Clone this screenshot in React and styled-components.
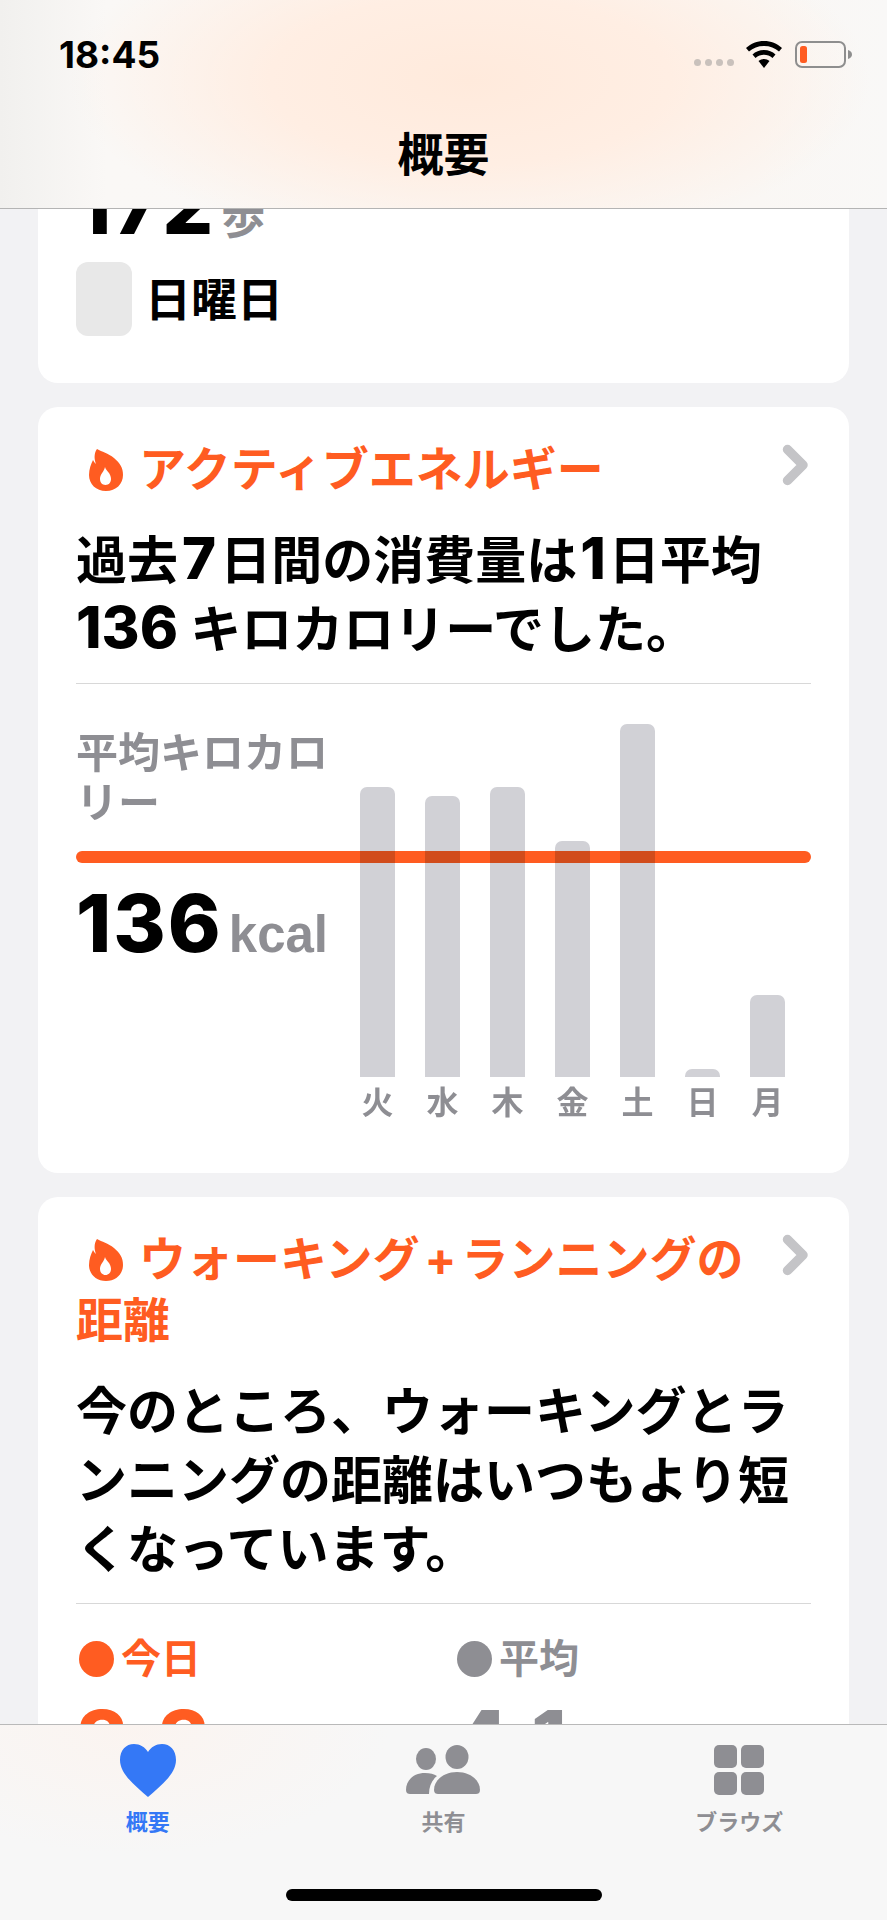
import styled, { createGlobalStyle } from "styled-components";

const GlobalStyle = createGlobalStyle`
  body {
    margin: 0;
    background: #f2f2f4;
    font-family: Inter, "Noto Sans CJK JP", sans-serif;
    font-weight: 700;
    color: #000;
  }
`;

const ORANGE = "#ff5c21";
const GREY = "#8e8e93";

const Page = styled.div`
  width: 887px;
  height: 1920px;
  display: flex;
  flex-direction: column;
  overflow: hidden;
  background: #f2f2f4;
`;

const Header = styled.header`
  height: 208px;
  flex: none;
  display: flex;
  flex-direction: column;
  border-bottom: 1px solid #b4b4b4;
  background:
    radial-gradient(ellipse 400px 170px at 470px 80px, #ffeadc 0%, #ffeee3 50%, rgba(255, 240, 230, 0) 100%),
    linear-gradient(90deg, #f1f0ee 0%, #faf8f6 12%, #faf7f4 85%, #f9f8f7 100%);
`;

const StatusBar = styled.div`
  display: flex;
  align-items: flex-start;
  height: 128px;
  padding: 36px 34px 0 59px;
  box-sizing: border-box;
`;

const Clock = styled.div`
  font-family: Inter, sans-serif;
  font-size: 37px;
  line-height: 38px;
  flex: 1;
`;

const StatusIcons = styled.div`
  display: flex;
  align-items: flex-start;
  margin-top: 5px;
`;

const SignalDots = styled.div`
  display: flex;
  gap: 4px;
  margin: 18px 12px 0 0;
`;

const SignalDot = styled.span`
  width: 7px;
  height: 7px;
  border-radius: 50%;
  background: #c9c1bc;
`;

const Battery = styled.svg`
  margin-left: 13px;
`;

const Title = styled.h1`
  margin: 0;
  margin-top: -4px;
  text-align: center;
  font-size: 46px;
  line-height: 60px;
  font-weight: 700;
`;

const Scroll = styled.main`
  flex: 1;
  min-height: 0;
  overflow: hidden;
  padding: 0 38px;
  display: flex;
  flex-direction: column;
  gap: 24px;
`;

const Card = styled.section`
  flex: none;
  background: #fff;
  border-radius: 20px;
  padding: 0 38px;
`;

const TopCard = styled(Card)`
  border-radius: 0 0 20px 20px;
  height: 174px;
  overflow: hidden;
`;

const BigNumber = styled.div`
  font-family: Inter, sans-serif;
  font-size: 80px;
  font-weight: 800;
  letter-spacing: 2px;
`;

const StepsValue = styled(BigNumber)`
  margin-top: -44px;
  height: 80px;
  line-height: 80px;
  display: flex;
  align-items: baseline;
  gap: 6px;
`;

const StepsUnit = styled.span`
  font-family: "Noto Sans CJK JP", sans-serif;
  font-size: 44px;
  font-weight: 700;
  letter-spacing: 0;
  color: ${GREY};
`;

const DayRow = styled.div`
  margin-top: 17px;
  display: flex;
  align-items: center;
  gap: 13px;
`;

const DaySwatch = styled.div`
  width: 56px;
  height: 74px;
  border-radius: 12px;
  background: #e8e8e8;
`;

const DayName = styled.div`
  font-size: 46px;
  line-height: 74px;
`;

const CardTitleRow = styled.div`
  display: flex;
  justify-content: space-between;
  align-items: flex-start;
  padding-top: 31px;
`;

const CardTitle = styled.h2`
  margin: 0;
  color: ${ORANGE};
  font-size: 47px;
  line-height: 61px;
  font-weight: 700;
  max-width: 690px;
`;

const PlusSign = styled.span`
  margin: 0 5px;
`;

const Flame = styled.svg`
  vertical-align: -5px;
  margin: 0 16px 0 13px;
`;

const Chevron = styled.svg`
  flex: none;
  margin-top: 6px;
  margin-right: 1px;
`;

const Summary = styled.p`
  margin: 27px 0 0;
  font-size: 51px;
  line-height: 69px;
  font-weight: 700;
`;

const SummaryNumber = styled.span`
  font-size: 58px;
  line-height: 0;
  font-weight: 800;
  margin: 0 ${(p) => p.$gap || 0}px;
`;

const Divider = styled.hr`
  margin: 19px 0 0;
  border: 0;
  height: 1px;
  background: #d8d8d8;
`;

const Chart = styled.div`
  position: relative;
  isolation: isolate;
  display: flex;
  height: 489px;
`;

const AverageLine = styled.div`
  position: absolute;
  z-index: 0;
  left: 0;
  right: 0;
  top: 167px;
  height: 12px;
  border-radius: 6px;
  background: ${ORANGE};
`;

const ChartLeft = styled.div`
  width: 284px;
  flex: none;
  padding-top: 44px;
`;

const ChartLabel = styled.div`
  width: 260px;
  font-size: 42px;
  line-height: 50px;
  color: ${GREY};
`;

const ChartValue = styled(BigNumber)`
  margin-top: 50px;
  display: flex;
  align-items: baseline;
  gap: 6px;
  line-height: 90px;
`;

const ChartUnit = styled.span`
  font-family: "Liberation Sans", sans-serif;
  font-size: 51px;
  font-weight: 700;
  letter-spacing: 0;
  color: ${GREY};
`;

const Bars = styled.div`
  display: flex;
  gap: 30px;
  padding-top: 40px;
`;

const BarColumn = styled.div`
  width: 35px;
  display: flex;
  flex-direction: column;
  align-items: center;
`;

const BarTrack = styled.div`
  width: 100%;
  height: 353px;
  display: flex;
  align-items: flex-end;
`;

const Bar = styled.div`
  position: relative;
  z-index: 1;
  width: 100%;
  background: #d1d1d6;
  border-radius: 7px 7px 0 0;
  mix-blend-mode: multiply;
`;

const BarLabel = styled.div`
  margin-top: 8px;
  font-size: 32px;
  line-height: 36px;
  color: ${GREY};
`;

const Legend = styled.div`
  display: grid;
  grid-template-columns: 378px 1fr;
  padding-top: 36px;
`;

const LegendHead = styled.div`
  display: flex;
  align-items: center;
  gap: 7px;
  margin-left: 3px;
  font-size: 40px;
  line-height: 38px;
  color: ${(p) => p.$color};
`;

const LegendDot = styled.span`
  width: 35px;
  height: 36px;
  border-radius: 50%;
  background: ${(p) => p.$color};
`;

const LegendValue = styled(BigNumber)`
  margin-top: 16px;
  line-height: 90px;
  color: ${(p) => p.$color};
`;

const TabBar = styled.nav`
  height: 196px;
  flex: none;
  box-sizing: border-box;
  border-top: 1px solid #b9b9b9;
  background:
    radial-gradient(ellipse 260px 130px at 130px 0, #fbf4f0 0%, rgba(247, 247, 247, 0) 100%),
    #f7f7f7;
  position: relative;
  display: grid;
  grid-template-columns: repeat(3, 1fr);
`;

const Tab = styled.div`
  display: flex;
  flex-direction: column;
  align-items: center;
  padding-top: 18px;
  font-size: 22px;
  line-height: 28px;
  color: ${(p) => (p.$active ? "#3478f6" : GREY)};
`;

const TabIcon = styled.div`
  height: 54px;
  margin-bottom: 11px;
  display: flex;
  align-items: center;
  justify-content: center;
`;

const GridIcon = styled.div`
  display: grid;
  grid-template-columns: 23px 23px;
  grid-auto-rows: 23px;
  gap: 4px;
`;

const GridCell = styled.span`
  border-radius: 5px;
  background: ${GREY};
`;

const HomeIndicator = styled.div`
  position: absolute;
  left: 286px;
  bottom: 19px;
  width: 316px;
  height: 12px;
  border-radius: 6px;
  background: #000;
`;

const days = [
  ["火", 290],
  ["水", 281],
  ["木", 290],
  ["金", 236],
  ["土", 353],
  ["日", 8],
  ["月", 82],
];

const FlameIcon = () => (
  <Flame width="34" height="42" viewBox="0 0 34 42">
    <path
      fill={ORANGE}
      fillRule="evenodd"
      d="M8 0C13 3 19 4 25 9C31 14 34 19 34 26C34 35 27 42 17 42C7 42 0 35 0 26C0 20 2 15 4 11C5 13 6 14 7 15C5 10 5 4 8 0ZM16 18C15 23 11 25 11 30C11 33 13 36 16.500 36C20 36 22 33 22 30C22 24 17 22 16 18Z"
    />
  </Flame>
);

const ChevronIcon = () => (
  <Chevron width="28" height="42" viewBox="0 0 28 42">
    <path d="M5.500 5.500L21 21L5.500 36.500" fill="none" stroke="#c4c4c7" strokeWidth="9.500" strokeLinecap="round" strokeLinejoin="round" />
  </Chevron>
);

export default function App() {
  return (
    <Page>
      <GlobalStyle />
      <Header>
        <StatusBar>
          <Clock>18:45</Clock>
          <StatusIcons>
            <SignalDots>
              <SignalDot />
              <SignalDot />
              <SignalDot />
              <SignalDot />
            </SignalDots>
            <svg width="36" height="27" viewBox="0 0 36 27">
              <path d="M18 0c7 0 13 2.600 18 7l-3 3.600C29 7 24 5 18 5S7 7 3 10.600L0 7C5 2.600 11 0 18 0z" />
              <path d="M18 9c4.500 0 8.500 1.600 11.500 4.400l-3 3.500C24 14.900 21 13.800 18 13.800s-6 1.100-8.500 3.100l-3-3.500C9.500 10.600 13.500 9 18 9z" />
              <path d="M18 18c2 0 4 .7 5.500 2L18 27l-5.500-7c1.500-1.300 3.500-2 5.500-2z" />
            </svg>
            <Battery width="58" height="27" viewBox="0 0 58 27">
              <rect x="1" y="1" width="49" height="25" rx="6" fill="none" stroke="#8e8e8e" strokeWidth="2" />
              <rect x="5" y="5" width="7" height="17" rx="2.500" fill={ORANGE} />
              <path d="M53 9c2.500.7 4 2.500 4 4.500S55.500 17.300 53 18z" fill="#8e8e8e" />
            </Battery>
          </StatusIcons>
        </StatusBar>
        <Title>概要</Title>
      </Header>

      <Scroll>
        <TopCard>
          <StepsValue>
            172<StepsUnit>歩</StepsUnit>
          </StepsValue>
          <DayRow>
            <DaySwatch />
            <DayName>日曜日</DayName>
          </DayRow>
        </TopCard>

        <Card>
          <CardTitleRow>
            <CardTitle>
              <FlameIcon />
              アクティブエネルギー
            </CardTitle>
            <ChevronIcon />
          </CardTitleRow>
          <Summary>
            過去<SummaryNumber $gap={4}>7</SummaryNumber>日間の消費量は<SummaryNumber $gap={3}>1</SummaryNumber>日平均
            <br />
            <SummaryNumber>136</SummaryNumber> キロカロリーでした。
          </Summary>
          <Divider />
          <Chart>
            <AverageLine />
            <ChartLeft>
              <ChartLabel>平均キロカロリー</ChartLabel>
              <ChartValue>
                136<ChartUnit>kcal</ChartUnit>
              </ChartValue>
            </ChartLeft>
            <Bars>
              {days.map(([day, h]) => (
                <BarColumn key={day}>
                  <BarTrack>
                    <Bar style={{ height: h }} />
                  </BarTrack>
                  <BarLabel>{day}</BarLabel>
                </BarColumn>
              ))}
            </Bars>
          </Chart>
        </Card>

        <Card>
          <CardTitleRow>
            <CardTitle>
              <FlameIcon />
              ウォーキング<PlusSign>+</PlusSign>ランニングの距離
            </CardTitle>
            <ChevronIcon />
          </CardTitleRow>
          <Summary>
            今のところ、ウォーキングとランニングの距離はいつもより短くなっています。
          </Summary>
          <Divider />
          <Legend>
            <div>
              <LegendHead $color={ORANGE}>
                <LegendDot $color={ORANGE} />
                今日
              </LegendHead>
              <LegendValue $color={ORANGE}>3.3</LegendValue>
            </div>
            <div>
              <LegendHead $color={GREY}>
                <LegendDot $color={GREY} />
                平均
              </LegendHead>
              <LegendValue $color={GREY}>4.1</LegendValue>
            </div>
          </Legend>
        </Card>
      </Scroll>

      <TabBar>
        <Tab $active>
          <TabIcon>
            <svg width="56" height="53" viewBox="0 0 56 53">
              <path
                fill="#3478f6"
                d="M28 8C25 3 20 0 14 0C6 0 0 6 0 16C0 31 18 44 28 53C38 44 56 31 56 16C56 6 50 0 42 0C36 0 31 3 28 8Z"
              />
            </svg>
          </TabIcon>
          概要
        </Tab>
        <Tab>
          <TabIcon>
            <svg width="74" height="50" viewBox="0 0 74 50">
              <g fill={GREY}>
                <ellipse cx="20" cy="14" rx="10" ry="11" />
                <ellipse cx="51" cy="12" rx="11.500" ry="12" />
                <path d="M0 45C0 35 8 28 19 28C24 28 28 29 31 31C26 35 23 41 23 49H4C2 49 0 48 0 45Z" />
                <path d="M28 45C28 35 38 27 51 27C64 27 74 35 74 45C74 48 72 49 70 49H32C30 49 28 48 28 45Z" />
              </g>
            </svg>
          </TabIcon>
          共有
        </Tab>
        <Tab>
          <TabIcon>
            <GridIcon>
              <GridCell />
              <GridCell />
              <GridCell />
              <GridCell />
            </GridIcon>
          </TabIcon>
          ブラウズ
        </Tab>
        <HomeIndicator />
      </TabBar>
    </Page>
  );
}
